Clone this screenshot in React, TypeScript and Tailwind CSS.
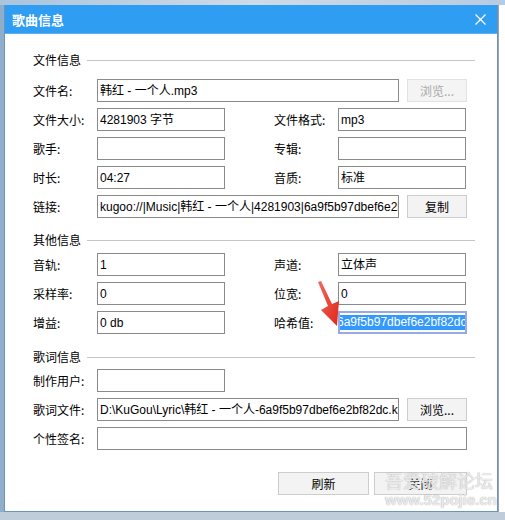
import React from 'react'

const cjk = { fontFamily: '"Noto Sans CJK SC", "Microsoft YaHei", sans-serif' }
const boxFont = { fontFamily: '"Liberation Sans", "Noto Sans CJK SC", sans-serif' }

function Label({ children, width = 'w-[64px]' }: { children: React.ReactNode; width?: string }) {
  return <div className={`${width} shrink-0 text-[12px] leading-[16px] text-black`}>{children}</div>
}

function Field({ value = '', width }: { value?: string; width: string }) {
  return (
    <div
      className={`${width} h-[23px] shrink-0 border border-[#8a8a8a] bg-white px-[2px] flex items-center overflow-hidden whitespace-nowrap text-[12px] text-black`}
      style={boxFont}
    >
      {value}
    </div>
  )
}

function Btn({ children, disabled = false, width = 'w-[60px]' }: { children: React.ReactNode; disabled?: boolean; width?: string }) {
  return (
    <div
      className={`${width} h-[23px] shrink-0 flex items-center justify-center border text-[12px] ${
        disabled ? 'border-[#e2e2e2] bg-[#f4f4f4] text-[#a9a9a9]' : 'border-[#cdcdcd] bg-[#f3f3f3] text-black'
      }`}
    >
      {children}
    </div>
  )
}

function SectionTitle({ title, className = '' }: { title: string; className?: string }) {
  return (
    <div className={`flex items-center h-[16px] ${className}`}>
      <span className="text-[12px] leading-[16px] text-black">{title}</span>
      <div className="flex-1 h-px bg-[#c6c6c6] ml-[6px]" />
    </div>
  )
}

function PairRow({ l1, v1, l2, v2, right }: { l1: string; v1?: string; l2: string; v2?: string; right?: React.ReactNode }) {
  return (
    <div className="flex items-center h-[23px]">
      <Label>{l1}</Label>
      <Field value={v1} width="w-[128px]" />
      <div className="w-[49px] shrink-0" />
      <Label>{l2}</Label>
      {right ?? <Field value={v2} width="w-[128px]" />}
    </div>
  )
}

function WideRow({ label, value, button }: { label: string; value?: string; button?: React.ReactNode }) {
  return (
    <div className="flex items-center h-[23px]">
      <Label>{label}</Label>
      <Field value={value} width="w-[302px]" />
      {button && <div className="ml-[8px] flex">{button}</div>}
    </div>
  )
}

function HashField() {
  return (
    <div
      className="w-[129px] h-[23px] shrink-0 border-2 border-[#98a9e8] bg-white flex items-center overflow-hidden whitespace-nowrap text-[12px]"
      style={boxFont}
    >
      <span className="bg-[#3399ff] text-white leading-[15px] -ml-[3px] pr-[2px]">6a9f5b97dbef6e2bf82dc</span>
    </div>
  )
}

export default function App() {
  return (
    <div className="relative w-[505px] h-[520px] overflow-hidden bg-[#bfccd9]" style={cjk}>
      <div className="h-[5px] bg-gradient-to-r from-[#a9c4dd] via-[#cfdbe6] to-[#b7cbe0]" />
      <div className="flex">
        <div className="w-[4px] h-[507px] bg-[#8eaecb]" />
        <div className="w-[494px] h-[507px] flex flex-col bg-white border-x border-b border-[#6d93bd]">
          <div className="h-[29px] shrink-0 flex items-center justify-between bg-[#2e9df2] pl-[7px] pr-[11px] border-b border-[#5cb2f5]">
            <span className="text-[13px] font-bold text-white leading-none">歌曲信息</span>
            <svg width="11" height="11" viewBox="0 0 11 11" className="text-white">
              <path d="M0.5 0.5 L10.5 10.5 M10.5 0.5 L0.5 10.5" stroke="currentColor" strokeWidth="1.3" />
            </svg>
          </div>

          <div className="flex flex-col pl-[28px] pr-[22px] pt-[18px]">
            <SectionTitle title="文件信息" />
            <div className="flex flex-col gap-[6px] mt-[11px]">
              <WideRow label="文件名:" value="韩红 - 一个人.mp3" button={<Btn disabled>浏览...</Btn>} />
              <PairRow l1="文件大小:" v1="4281903 字节" l2="文件格式:" v2="mp3" />
              <PairRow l1="歌手:" l2="专辑:" />
              <PairRow l1="时长:" v1="04:27" l2="音质:" v2="标准" />
              <WideRow
                label="链接:"
                value="kugoo://|Music|韩红 - 一个人|4281903|6a9f5b97dbef6e2bf82dc"
                button={<Btn>复制</Btn>}
              />
            </div>

            <SectionTitle title="其他信息" className="mt-[14px]" />
            <div className="flex flex-col gap-[6px] mt-[5px]">
              <PairRow l1="音轨:" v1="1" l2="声道:" v2="立体声" />
              <PairRow l1="采样率:" v1="0" l2="位宽:" v2="0" />
              <PairRow l1="增益:" v1="0 db" l2="哈希值:" right={<HashField />} />
            </div>

            <SectionTitle title="歌词信息" className="mt-[15px]" />
            <div className="flex flex-col gap-[6px] mt-[4px]">
              <div className="flex items-center h-[23px]">
                <Label>制作用户:</Label>
                <Field width="w-[128px]" />
              </div>
              <WideRow
                label="歌词文件:"
                value="D:\KuGou\Lyric\韩红 - 一个人-6a9f5b97dbef6e2bf82dc.krc"
                button={<Btn>浏览...</Btn>}
              />
              <div className="flex items-center h-[23px]">
                <Label>个性签名:</Label>
                <Field width="w-[370px]" />
              </div>
            </div>

            <div className="flex justify-end gap-[5px] mt-[22px] pr-[8px]">
              <Btn width="w-[91px]">刷新</Btn>
              <Btn width="w-[93px]">关闭</Btn>
            </div>
          </div>
        </div>
        <div className="w-[7px] h-[507px] bg-white border-l border-[#9aa4ae]" />
      </div>

      {/* red arrow pointing at the hash field */}
      <svg className="absolute left-[310px] top-[276px]" width="34" height="54" viewBox="0 0 34 54">
        <defs>
          <linearGradient id="arrowFill" x1="0" y1="0" x2="1" y2="1">
            <stop offset="0" stopColor="#f06a5a" />
            <stop offset="1" stopColor="#e0261c" />
          </linearGradient>
        </defs>
        <polygon points="8,6 11,5 22,28 29,25 27,50 11,34 18,30" fill="url(#arrowFill)" />
      </svg>

      {/* forum watermark */}
      <div className="absolute left-[385px] top-[469px] flex flex-col items-start pointer-events-none">
        <span className="text-[18px] leading-[22px] text-white/80 [text-shadow:0_0_1px_#8a8a8a]">吾爱破解论坛</span>
        <span
          className="text-[15px] leading-[17px] font-bold text-white/80 [text-shadow:0_0_1px_#8a8a8a]"
          style={{ fontFamily: '"Liberation Sans", sans-serif' }}
        >
          www.52pojie.cn
        </span>
      </div>
    </div>
  )
}
